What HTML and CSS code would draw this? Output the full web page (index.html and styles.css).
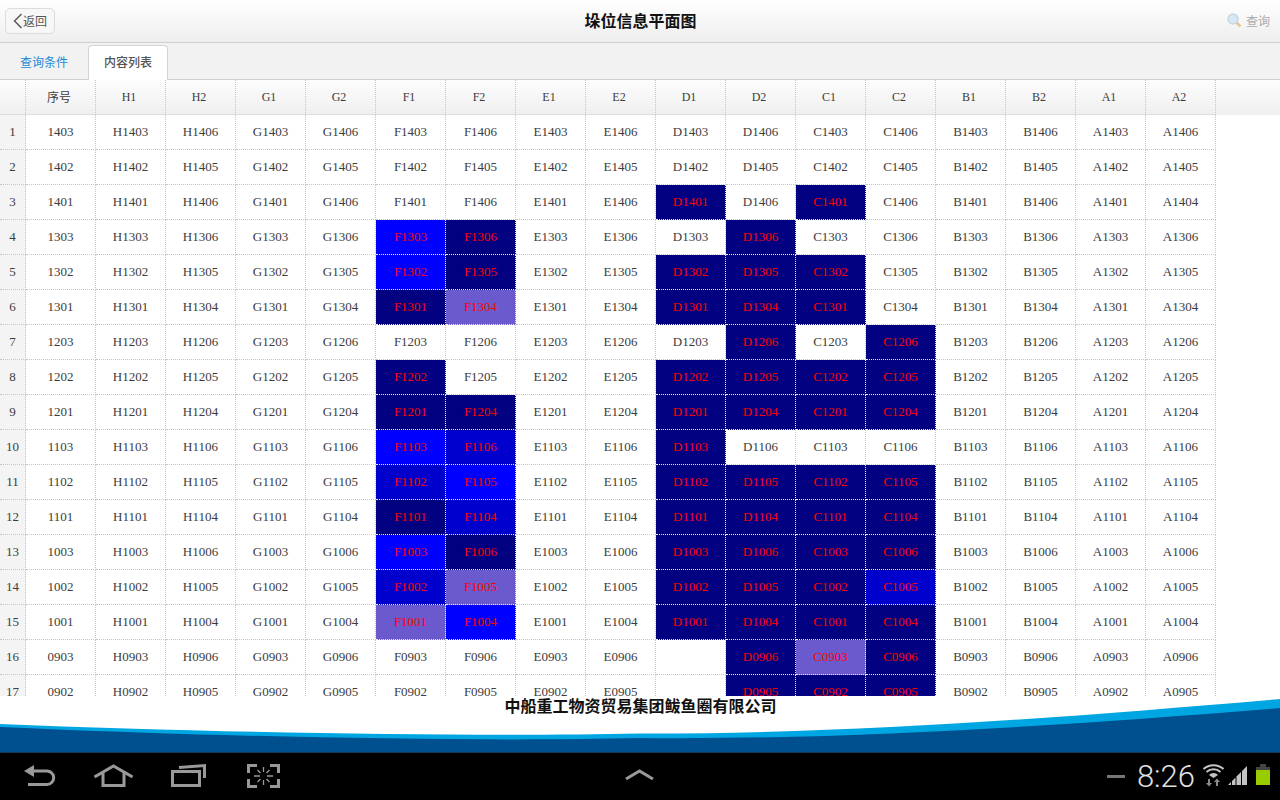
FILE: index.html
```html
<!DOCTYPE html>
<html>
<head>
<meta charset="utf-8">
<title>垛位信息平面图</title>
<link rel="stylesheet" href="styles.css">
</head>
<body>

<div class="app">
    <div class="toolbar">
        <a class="back-btn">
            <svg class="back-chevron" width="10" height="16" viewBox="0 0 10 16"><path d="M8.5 1 L1.5 8 L8.5 15" /></svg>
            <span>返回</span>
        </a>
        <div class="page-title">垛位信息平面图</div>
        <a class="search-btn">
            <svg width="15" height="15" viewBox="0 0 15 15">
                <line class="search-handle" x1="9.5" y1="9.5" x2="13.5" y2="13.5" />
                <circle class="search-lens" cx="6" cy="6" r="5" />
            </svg>
            <span>查询</span>
        </a>
    </div>

    <div class="tabs">
        <div class="tab">查询条件</div>
        <div class="tab tab-active">内容列表</div>
    </div>

    <div class="grid">
        <table class="grid-table" id="gridTable"></table>
    </div>

    <div class="footer">
        <svg class="footer-wave" width="1280" height="56" viewBox="0 0 1280 56">
            <path class="wave-light" d="M0 28 C220 37 480 41 640 37.5 C860 38 1080 20 1280 3 V56 H0 Z" />
            <path class="wave-dark" d="M0 31 C220 41 480 46 640 42 C860 44 1080 28 1280 12 V56 H0 Z" />
        </svg>
        <div class="company">中船重工物资贸易集团鲅鱼圈有限公司</div>
    </div>

    <div class="sysbar">
        <div class="sys-nav">
            <svg class="sys-icon" width="32" height="47" viewBox="24 753 32 47">
                <path class="fill-grey" d="M24 771 L34 765 V777 Z" />
                <path class="line-grey" d="M33 771 H47 a6.7 6.7 0 0 1 0 13.4 H28" />
            </svg>
            <svg class="sys-icon" width="39" height="47" viewBox="94 753 39 47">
                <path class="line-grey" d="M94.5 777 L113.5 766 L132.5 777" />
                <path class="line-grey" d="M103 773 V785.5 H124 V773" />
            </svg>
            <svg class="sys-icon" width="38" height="47" viewBox="171 753 38 47">
                <rect class="line-grey" x="172.5" y="771.5" width="27" height="14" />
                <path class="line-grey" d="M179 767.5 L204.5 765.5 V778" />
            </svg>
            <svg class="sys-icon" width="33" height="47" viewBox="247 753 33 47">
                <path class="line-grey" d="M248.5 773 V765.5 H257 M270 765.5 H278.5 V773 M278.5 779 V786.5 H270 M257 786.5 H248.5 V779" />
                <path class="line-thin" d="M263.5 767 V772 M263.5 780 V785 M254 776 H260 M267 776 H273 M257.5 770 L260.5 773 M269.5 770 L266.5 773 M257.5 782 L260.5 779 M269.5 782 L266.5 779" />
            </svg>
        </div>
        <svg class="sys-icon" width="30" height="47" viewBox="625 753 30 47">
            <path class="line-grey" d="M626 779 L639.5 771 L653 779" />
        </svg>
        <div class="sys-status">
            <svg class="sys-icon" width="18" height="47" viewBox="1107 753 18 47">
                <line class="line-dim" x1="1107" y1="776.5" x2="1125" y2="776.5" />
            </svg>
            <span class="clock">8:26</span>
            <svg class="sys-icon wifi" width="22" height="47" viewBox="1202 753 22 47">
                <path class="wifi-arc" d="M1203.5 769 A15 15 0 0 1 1223.5 769" />
                <path class="wifi-arc" d="M1206.5 772 A10.5 10.5 0 0 1 1220.5 772" />
                <path class="fill-light" d="M1209 775 A6 6 0 0 1 1218 775 L1213.5 778 Z" />
                <path class="fill-dim" d="M1208 779 H1210 V783 H1212 L1209 786.5 L1206 783 H1208 Z" />
                <path class="fill-dim" d="M1216 786 H1218 V782 H1220 L1217 778.5 L1214 782 H1216 Z" />
            </svg>
            <svg class="sys-icon signal" width="19" height="47" viewBox="1228 753 19 47">
                <path class="fill-light" d="M1228 785 L1231 782 V785 Z" />
                <path class="fill-light" d="M1232 785 V781 L1235.5 777.5 V785 Z" />
                <path class="fill-light" d="M1236.5 785 V776.5 L1241 772 V785 Z" />
                <path class="fill-light" d="M1242 785 V771 L1247 766 V785 Z" />
            </svg>
            <svg class="sys-icon battery" width="14" height="47" viewBox="1256 753 14 47">
                <rect class="batt-top" x="1260" y="764" width="6" height="3" />
                <rect class="batt-top" x="1256" y="767" width="14" height="3" />
                <rect class="batt-level" x="1256" y="770" width="14" height="15" />
            </svg>
        </div>
    </div>
</div>

<script src="script.js"></script>
</body>
</html>
```

FILE: styles.css
```css
html, body {
    margin: 0;
    padding: 0;
    background: #fff;
}
body {
    font-family: "Noto Sans CJK SC", "Noto Sans", sans-serif;
}
.app {
    width: 1280px;
    height: 800px;
    display: flex;
    flex-direction: column;
    overflow: hidden;
}

/* top bar */
.toolbar {
    height: 43px;
    box-sizing: border-box;
    flex: none;
    display: flex;
    align-items: center;
    justify-content: space-between;
    padding: 0 10px 1px 5px;
    background: linear-gradient(#ffffff, #eeeeee);
    border-bottom: 1px solid #cfcfcf;
}
.back-btn {
    width: 50px;
    height: 26px;
    box-sizing: border-box;
    display: flex;
    align-items: center;
    padding-left: 7px;
    border: 1px solid #dcdcdc;
    border-radius: 5px;
    background: #f7f7f7;
    color: #555;
    font-size: 12px;
}
.back-chevron path {
    fill: none;
    stroke: #555;
    stroke-width: 1.4;
}
.page-title {
    font-size: 16px;
    font-weight: 700;
    color: #111;
    margin-right: 1px;
    padding-bottom: 2px;
}
.search-btn {
    display: flex;
    align-items: center;
    gap: 4px;
    color: #aaa;
    font-size: 12px;
}
.search-lens {
    fill: #d4e8f6;
    stroke: #c9d6df;
    stroke-width: 1.5;
}
.search-handle {
    stroke: #edc590;
    stroke-width: 2.5;
}

/* tabs */
.tabs {
    height: 37px;
    box-sizing: border-box;
    flex: none;
    display: flex;
    align-items: flex-end;
    gap: 4px;
    padding-left: 4px;
    background: #f2f2f2;
    border-bottom: 1px solid #cfcfcf;
}
.tab {
    width: 80px;
    height: 35px;
    box-sizing: border-box;
    margin-bottom: -1px;
    padding-bottom: 3px;
    display: flex;
    align-items: center;
    justify-content: center;
    color: #1a8ad6;
    font-size: 12px;
}
.tab-active {
    background: #fff;
    color: #555;
    font-weight: 500;
    border: 1px solid #d4d4d4;
    border-bottom: none;
    border-radius: 4px 4px 0 0;
}

/* table */
.grid {
    height: 616px;
    flex: none;
    overflow: hidden;
    background: linear-gradient(#fdfdfd, #efefef) no-repeat top left / 100% 35px;
}
.grid-table {
    width: 1216px;
    table-layout: fixed;
    border-collapse: separate;
    border-spacing: 0;
    font-family: "Liberation Serif", "Noto Sans CJK SC", serif;
    font-size: 13px;
    color: #3c3c3c;
}
.grid-table th,
.grid-table td {
    box-sizing: border-box;
    width: 70px;
    height: 35px;
    padding: 0;
    text-align: center;
    font-weight: normal;
    border-right: 1px dotted #c6c6c6;
    border-bottom: 1px dotted #c6c6c6;
}
.grid-table th {
    padding-right: 3px;
    border-bottom: 1px solid #dddddd;
    font-size: 12px;
}
.grid-table .idx {
    width: 26px;
    padding-right: 0;
    background: #f4f4f4;
}
.grid-table th.idx {
    background: none;
}
.grid-table td.navy,
.grid-table td.blue,
.grid-table td.medium,
.grid-table td.slate {
    color: #ff0000;
    border-color: #eeeeee;
}
.navy { background: #000080; }
.blue { background: #0000ff; }
.medium { background: #0000cd; }
.slate { background: #6a5acd; }

/* footer */
.footer {
    height: 56px;
    flex: none;
    position: relative;
    background: #fff;
}
.footer-wave {
    position: absolute;
    left: 0;
    top: 0;
}
.wave-light { fill: #00a6e2; }
.wave-dark { fill: #004f8e; }
.company {
    position: relative;
    text-align: center;
    font-size: 16px;
    font-weight: 700;
    line-height: 18px;
    color: #111;
    padding-left: 1px;
}

/* android bar */
.sysbar {
    height: 48px;
    box-sizing: border-box;
    flex: none;
    display: grid;
    grid-template-columns: 1fr auto 1fr;
    background: #000;
    border-top: 1px solid #0f3a56;
}
.sys-nav {
    display: flex;
    gap: 38px;
    padding-left: 24px;
}
.sys-status {
    display: flex;
    justify-content: flex-end;
    padding-right: 10px;
}
.sys-icon {
    display: block;
}
.clock {
    margin-left: 12px;
    font-family: Roboto, sans-serif;
    font-weight: 300;
    font-size: 31px;
    line-height: 47px;
    color: #e0e0e0;
}
.wifi { margin-left: 7px; }
.signal { margin-left: 4px; }
.battery { margin-left: 9px; }
.line-grey {
    fill: none;
    stroke: #999;
    stroke-width: 3;
}
.line-thin {
    fill: none;
    stroke: #999;
    stroke-width: 1.3;
}
.line-dim {
    stroke: #777;
    stroke-width: 3;
}
.fill-grey { fill: #999; }
.fill-light { fill: #c4c4c4; }
.fill-dim { fill: #8a8a8a; }
.wifi-arc {
    fill: none;
    stroke: #c4c4c4;
    stroke-width: 2;
}
.batt-top { fill: #444; }
.batt-level { fill: #99cc00; }
```

FILE: script.js
```js
const columns = ["H1", "H2", "G1", "G2", "F1", "F2", "E1", "E2", "D1", "D2", "C1", "C2", "B1", "B2", "A1", "A2"];

// row number on the left is index + 1: [first code, second code]
const rows = [
    ["1403", "1406"], ["1402", "1405"], ["1401", "1406"],
    ["1303", "1306"], ["1302", "1305"], ["1301", "1304"],
    ["1203", "1206"], ["1202", "1205"], ["1201", "1204"],
    ["1103", "1106"], ["1102", "1105"], ["1101", "1104"],
    ["1003", "1006"], ["1002", "1005"], ["1001", "1004"],
    ["0903", "0906"], ["0902", "0905"]
];

// coloured stacks, keyed by row number
const marks = {
    3: { D1: "navy", C1: "navy" },
    4: { F1: "blue", F2: "navy", D2: "navy" },
    5: { F1: "blue", F2: "navy", D1: "navy", D2: "navy", C1: "navy" },
    6: { F1: "navy", F2: "slate", D1: "navy", D2: "navy", C1: "navy" },
    7: { D2: "navy", C2: "navy" },
    8: { F1: "navy", D1: "navy", D2: "navy", C1: "navy", C2: "navy" },
    9: { F1: "navy", F2: "navy", D1: "navy", D2: "navy", C1: "navy", C2: "navy" },
    10: { F1: "blue", F2: "medium", D1: "navy" },
    11: { F1: "medium", F2: "blue", D1: "navy", D2: "navy", C1: "navy", C2: "navy" },
    12: { F1: "navy", F2: "medium", D1: "navy", D2: "navy", C1: "navy", C2: "navy" },
    13: { F1: "blue", F2: "navy", D1: "navy", D2: "navy", C1: "navy", C2: "navy" },
    14: { F1: "medium", F2: "slate", D1: "navy", D2: "navy", C1: "navy", C2: "medium" },
    15: { F1: "slate", F2: "blue", D1: "navy", D2: "navy", C1: "navy", C2: "navy" },
    16: { D2: "navy", C1: "slate", C2: "navy" },
    17: { D2: "navy", C1: "navy", C2: "navy" }
};

function buildCell(tag, text, className) {
    const cell = document.createElement(tag);
    cell.textContent = text;
    if (className) {
        cell.className = className;
    }
    return cell;
}

function buildTable() {
    const table = document.getElementById("gridTable");

    const head = document.createElement("tr");
    head.appendChild(buildCell("th", "", "idx"));
    head.appendChild(buildCell("th", "序号"));
    columns.forEach(function(col) {
        head.appendChild(buildCell("th", col));
    });
    table.appendChild(head);

    rows.forEach(function(codes, i) {
        const num = i + 1;
        const rowMarks = marks[num] || {};
        const tr = document.createElement("tr");
        tr.appendChild(buildCell("td", num, "idx"));
        tr.appendChild(buildCell("td", codes[0]));
        columns.forEach(function(col, c) {
            let code = codes[c % 2];
            if (num === 3 && col === "A2") {
                code = "1404";
            }
            // nothing stored in D1 for tiers 09
            const text = (num >= 16 && col === "D1") ? "" : col[0] + code;
            tr.appendChild(buildCell("td", text, rowMarks[col]));
        });
        table.appendChild(tr);
    });
}

buildTable();
```
